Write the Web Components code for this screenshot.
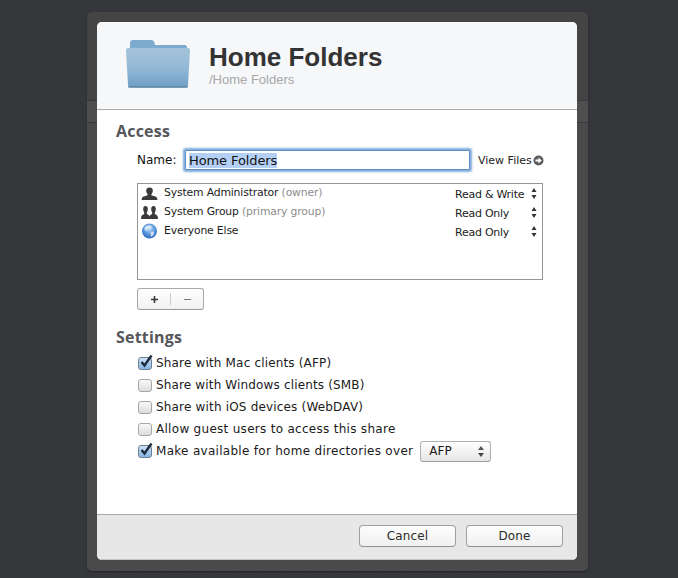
<!DOCTYPE html>
<html>
<head>
<meta charset="utf-8">
<title>Home Folders</title>
<style>
  html, body { margin: 0; height: 100%; }
  html {
    background-color: #36373a;
    background-image: repeating-linear-gradient(90deg, rgba(0,0,0,.02) 0 1px, transparent 1px 3px);
  }
  body { font-family: "DejaVu Sans", sans-serif; overflow: hidden; }
</style>
</head>
<body>
<share-sheet>
  <sheet-header slot="header" heading="Home Folders" path="/Home Folders"></sheet-header>
  <sheet-section slot="body" label="Access">
    <name-field value="Home Folders"></name-field>
    <access-list>
      <access-row kind="user" who="System Administrator" note="(owner)" perm="Read &amp; Write"></access-row>
      <access-row kind="group" who="System Group" note="(primary group)" perm="Read Only"></access-row>
      <access-row kind="globe" who="Everyone Else" perm="Read Only"></access-row>
    </access-list>
    <add-remove></add-remove>
  </sheet-section>
  <sheet-section slot="body" label="Settings" class="settings">
    <check-row checked style="--track: .17px">Share with Mac clients (AFP)</check-row>
    <check-row style="--track: .15px">Share with Windows clients (SMB)</check-row>
    <check-row style="--track: .18px">Share with iOS devices (WebDAV)</check-row>
    <check-row style="--track: .29px">Allow guest users to access this share</check-row>
    <check-row checked style="--track: .29px">Make available for home directories over <pop-up>AFP</pop-up></check-row>
  </sheet-section>
  <mac-button slot="footer">Cancel</mac-button>
  <mac-button slot="footer">Done</mac-button>
</share-sheet>

<script>
  class ShareSheet extends HTMLElement {
    constructor() {
      super();
      this.attachShadow({ mode: 'open' });
      this.shadowRoot.innerHTML = `
        <style>
          :host { display: block; padding: 12px 0 0 87px; }
          #frame {
            width: 480px; height: 539px; padding: 10px 11px 10px 10px;
            background: linear-gradient(#444 0 88px, #37383a 88px 89px, #4e4e4e 89px 110px, #37383a 110px 111px, #4a4a4a 111px);
            border-radius: 5px;
            box-shadow: 0 1px 2px rgba(0,0,0,.35);
          }
          #sheet {
            display: flex; flex-direction: column;
            height: 538px; background: #fff; border-radius: 5px; overflow: hidden;
          }
          header { height: 88px; flex: none; }
          main { flex: 1; }
          footer {
            height: 46px; flex: none; box-sizing: border-box;
            display: flex; justify-content: flex-end; gap: 10px;
            padding: 10px 14px 0 0;
            background: #e7e7e7; border-top: 1px solid #a9a9a9; border-bottom: 1px solid #c4c4c4;
          }
        </style>
        <div id="frame">
          <div id="sheet">
            <header><slot name="header"></slot></header>
            <main><slot name="body"></slot></main>
            <footer><slot name="footer"></slot></footer>
          </div>
        </div>
      `;
    }
  }

  class SheetHeader extends HTMLElement {
    constructor() {
      super();
      this.attachShadow({ mode: 'open' });
      this.shadowRoot.innerHTML = `
        <style>
          :host {
            display: flex; box-sizing: border-box; height: 88px;
            padding: 17px 0 0 27px;
            background: #f6f7f9; border-bottom: 1px solid #aaa;
          }
          svg { width: 66px; height: 52px; margin-right: 19px; flex: none; }
          h1 {
            margin: 1px 0 0; font: bold 26px/34px "Liberation Sans", sans-serif;
            color: #333;
          }
          p { margin: -2px 0 0; font: 13px/16px "Liberation Sans", sans-serif; color: #a8a8a8; }
        </style>
        <svg viewBox="0 0 66 52">
          <defs>
            <linearGradient id="fb" x1="0" y1="0" x2="0" y2="1">
              <stop offset="0" stop-color="#a4c3da"/>
              <stop offset=".5" stop-color="#94b9d6"/>
              <stop offset="1" stop-color="#6f9fc6"/>
            </linearGradient>
          </defs>
          <path d="M6 4Q6 1 9 1H27Q30 1 30.500 4L31 6H61Q63 6 63 8V12H6Z" fill="#7dabcd"/>
          <path d="M2 11Q2 9 4 9H64Q66 9 66 11L64 46Q64 48 62 48H6Q4 48 4 46Z" fill="url(#fb)"/>
          <path d="M4 47H64V47.500Q64 49 62 49H6Q4 49 4 47.500Z" fill="#5d87a8" opacity=".8"/>
        </svg>
        <div>
          <h1></h1>
          <p></p>
        </div>
      `;
    }
    connectedCallback() {
      this.shadowRoot.querySelector('h1').textContent = this.getAttribute('heading');
      this.shadowRoot.querySelector('p').textContent = this.getAttribute('path');
    }
  }

  class SheetSection extends HTMLElement {
    constructor() {
      super();
      this.attachShadow({ mode: 'open' });
      this.shadowRoot.innerHTML = `
        <style>
          :host { display: block; padding: 11px 0 0 19px; }
          :host(.settings) { padding-top: 17px; }
          :host(.settings) slot { display: block; margin-top: 5px; }
          h2 {
            margin: 0; font: bold 16px/20px "Open Sans", sans-serif;
            color: #55565a; letter-spacing: .2px;
          }
        </style>
        <h2></h2>
        <slot></slot>
      `;
    }
    connectedCallback() {
      this.shadowRoot.querySelector('h2').textContent = this.getAttribute('label');
    }
  }

  class NameField extends HTMLElement {
    constructor() {
      super();
      this.attachShadow({ mode: 'open' });
      this.shadowRoot.innerHTML = `
        <style>
          :host {
            display: flex; align-items: center; height: 24px; margin: 7px 0 0 21px;
            font-size: 12px; color: #111;
          }
          label { width: 49px; flex: none; }
          #box {
            box-sizing: border-box; width: 285px; height: 20px; flex: none;
            display: flex; align-items: center; padding-left: 3px; margin-left: -1px;
            background: #fff; border: 1px solid #5f8fc2; border-radius: 1px;
            box-shadow: 0 0 2px 2px #83aedd;
          }
          #sel { background: #b5d0f5; line-height: 15px; font-size: 13px; letter-spacing: -.1px; color: #111; }
          a { margin-left: 8px; display: flex; align-items: center; gap: 1px; font-size: 11px; color: #222; }
          svg { width: 11px; height: 11px; }
        </style>
        <label>Name:</label>
        <div id="box"><span id="sel"></span></div>
        <a>View Files
          <svg viewBox="0 0 11 11">
            <circle cx="5.5" cy="5.5" r="5" fill="#5c5c5c"/>
            <path d="M2.5 4.5H5.5V2.500L8.800 5.500L5.500 8.500V6.500H2.500Z" fill="#fff"/>
          </svg>
        </a>
      `;
    }
    connectedCallback() {
      this.shadowRoot.querySelector('#sel').textContent = this.getAttribute('value');
    }
  }

  class AccessList extends HTMLElement {
    constructor() {
      super();
      this.attachShadow({ mode: 'open' });
      this.shadowRoot.innerHTML = `
        <style>
          :host {
            display: block; box-sizing: border-box; width: 406px; height: 97px;
            margin: 11px 0 0 21px; padding-top: 1px;
            border: 1px solid #969696; background: #fff;
          }
        </style>
        <slot></slot>
      `;
    }
  }

  const PERSON = 'M8.5 2.500C6 2.500 5 4.300 5.200 6C5.300 7.300 5.900 8.500 6.600 9.200V10.300C5 11 1.800 11.300 1 12.800L.5 15H16.500L16 12.800C15.200 11.300 12 11 10.400 10.300V9.200C11.100 8.500 11.700 7.300 11.800 6C12 4.300 11 2.500 8.500 2.500Z';
  const BUST = 'M4.500 2C2.800 2 2 3.600 2.200 5.500C2.300 6.700 2.700 7.700 3.200 8.400V10C2 10.800 .6 11.200 .3 12.500L0 15H9L8.700 12.500C8.400 11.200 7 10.800 5.800 10V8.400C6.300 7.700 6.700 6.700 6.800 5.500C7 3.600 6.200 2 4.500 2Z';
  const ICONS = {
    user: `<svg viewBox="0 0 17 16" width="17" height="16"><path d="${PERSON}" fill="#3a3a3a"/></svg>`,
    group: `<svg viewBox="0 0 17 16" width="17" height="16">
      <g fill="#3a3a3a">
        <path d="${BUST}"/>
        <path transform="translate(8)" d="${BUST}"/>
      </g></svg>`,
    globe: `<svg viewBox="0 0 17 16" width="17" height="16">
      <defs><radialGradient id="g" cx=".5" cy=".35" r=".75">
        <stop offset="0" stop-color="#bcdcf7"/><stop offset=".55" stop-color="#4f8fd6"/><stop offset="1" stop-color="#1d5cae"/>
      </radialGradient></defs>
      <circle cx="8.500" cy="8" r="7.500" fill="url(#g)"/>
      <path d="M4.500 3.500C6.500 2 9.500 2 11 3.500L9 6L6.500 5.500L6 8L3.500 7C3.300 5.800 3.700 4.400 4.500 3.500ZM9.500 9L13 8.500L12.500 12L10 14Z" fill="#e9f2fb" opacity=".8"/>
    </svg>`
  };

  class AccessRow extends HTMLElement {
    constructor() {
      super();
      this.attachShadow({ mode: 'open' });
      this.shadowRoot.innerHTML = `
        <style>
          :host {
            display: flex; height: 19px; font-size: 11px; color: #1c1c1c;
          }
          #icon { width: 26px; box-sizing: border-box; padding: 0 5px 0 3px; flex: none; }
          #icon svg { display: block; }
          #who { flex: 1; line-height: 15px; font-size: 10.8px; letter-spacing: -.15px; white-space: nowrap; }
          #who span { color: #8c8c8c; }
          #perm { width: 76px; flex: none; line-height: 19px; letter-spacing: -.25px; white-space: nowrap; }
          svg.arrows { width: 6px; height: 11px; margin: 3px 5px 0 0; flex: none; }
        </style>
        <div id="icon"></div>
        <div id="who"></div>
        <div id="perm"></div>
        <svg class="arrows" viewBox="0 0 6 11"><path d="M3 0L5.500 4H.5ZM3 11L.5 7H5.500Z" fill="#333"/></svg>
      `;
    }
    connectedCallback() {
      const root = this.shadowRoot;
      root.querySelector('#icon').innerHTML = ICONS[this.getAttribute('kind')];
      const note = this.getAttribute('note');
      root.querySelector('#who').innerHTML = this.getAttribute('who') + (note ? ` <span>${note}</span>` : '');
      root.querySelector('#perm').textContent = this.getAttribute('perm');
    }
  }

  class AddRemove extends HTMLElement {
    constructor() {
      super();
      this.attachShadow({ mode: 'open' });
      this.shadowRoot.innerHTML = `
        <style>
          :host {
            display: flex; align-items: center; box-sizing: border-box;
            width: 67px; height: 22px; margin: 8px 0 0 21px;
            border: 1px solid #aaa; border-bottom-color: #999; border-radius: 3px;
            background: linear-gradient(#fff, #f1f1f1);
          }
          div { flex: none; display: flex; justify-content: center; align-items: center; height: 12px; }
          #add { width: 32px; border-right: 1px solid #ccc; }
          #remove { width: 32px; }
          svg { width: 9px; height: 9px; }
        </style>
        <div id="add"><svg viewBox="0 0 9 9"><path d="M3.750 1H5.250V3.750H8V5.250H5.250V8H3.750V5.250H1V3.750H3.750Z" fill="#333"/></svg></div>
        <div id="remove"><svg viewBox="0 0 9 9"><rect x="1" y="4" width="7" height="1" fill="#777"/></svg></div>
      `;
    }
  }

  class CheckRow extends HTMLElement {
    constructor() {
      super();
      this.attachShadow({ mode: 'open' });
      this.shadowRoot.innerHTML = `
        <style>
          :host {
            display: flex; align-items: center; height: 22px; margin-left: 22px;
            font-size: 12px; letter-spacing: var(--track, .2px); color: #1a1a1a; white-space: nowrap;
          }
          #wrap { position: relative; width: 14px; height: 14px; flex: none; margin-right: 4px; }
          #box {
            box-sizing: border-box; width: 14px; height: 13px; margin: 1px 0 0 0;
            border: 1px solid #a6a6a6; border-radius: 3px;
            background: linear-gradient(#f9f9f9, #dcdcdc);
          }
          :host([checked]) #box {
            border-color: #6f7f92;
            background: linear-gradient(#cfe2f7, #87b4e6);
          }
          svg { position: absolute; left: 1px; top: -2px; width: 15px; height: 15px; display: none; }
          :host([checked]) svg { display: block; }
          ::slotted(pop-up) { margin-left: 7px; }
        </style>
        <div id="wrap">
          <div id="box"></div>
          <svg viewBox="0 0 15 15"><path d="M2.500 8L5.500 11.500L12.500 1.500" fill="none" stroke="#1c2b3c" stroke-width="2.400"/></svg>
        </div>
        <slot></slot>
      `;
    }
  }

  class PopUp extends HTMLElement {
    constructor() {
      super();
      this.attachShadow({ mode: 'open' });
      this.shadowRoot.innerHTML = `
        <style>
          :host {
            display: inline-flex; align-items: center; justify-content: space-between;
            box-sizing: border-box; width: 71px; height: 21px; padding: 0 6px 0 8px;
            border: 1px solid #b0b0b0; border-bottom-color: #9c9c9c; border-radius: 3px;
            background: linear-gradient(#fff, #e6e6e6);
            font-size: 12px; letter-spacing: 0; color: #1a1a1a;
          }
          svg { width: 6px; height: 11px; }
        </style>
        <slot></slot>
        <svg viewBox="0 0 6 11"><path d="M3 0L6 4H0Z" fill="#555"/><path d="M3 11L0 7H6Z" fill="#444"/></svg>
      `;
    }
  }

  class MacButton extends HTMLElement {
    constructor() {
      super();
      this.attachShadow({ mode: 'open' });
      this.shadowRoot.innerHTML = `
        <style>
          :host {
            display: flex; align-items: center; justify-content: center;
            box-sizing: border-box; width: 97px; height: 22px;
            border: 1px solid #a0a0a0; border-bottom-color: #8f8f8f; border-radius: 4px;
            background: linear-gradient(#fdfdfd, #f0f0f0);
            font-size: 12px; letter-spacing: .1px; color: #2a2a2a;
          }
        </style>
        <slot></slot>
      `;
    }
  }

  customElements.define('share-sheet', ShareSheet);
  customElements.define('sheet-header', SheetHeader);
  customElements.define('sheet-section', SheetSection);
  customElements.define('name-field', NameField);
  customElements.define('access-list', AccessList);
  customElements.define('access-row', AccessRow);
  customElements.define('add-remove', AddRemove);
  customElements.define('check-row', CheckRow);
  customElements.define('pop-up', PopUp);
  customElements.define('mac-button', MacButton);
</script>
</body>
</html>
